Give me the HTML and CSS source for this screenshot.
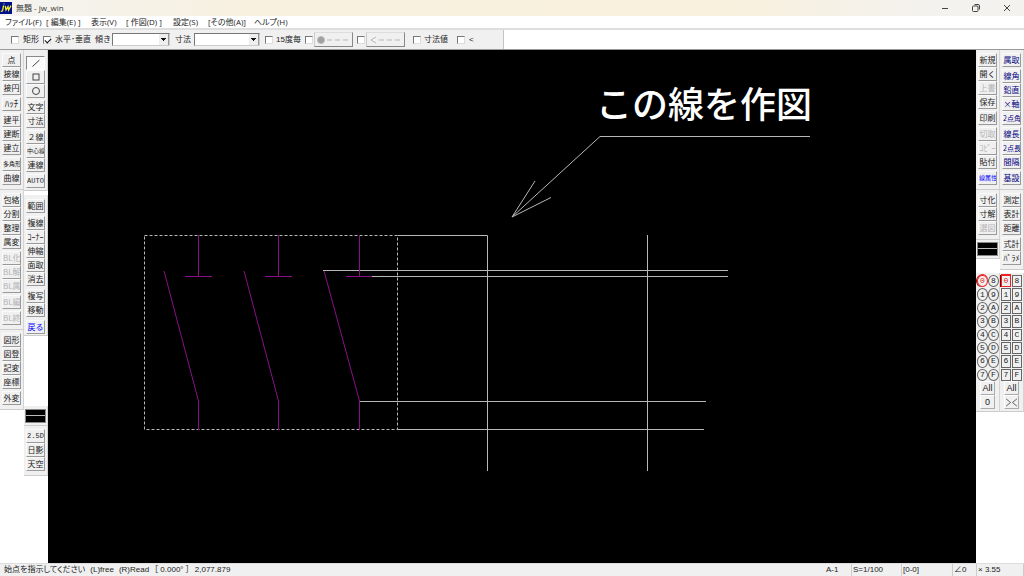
FILE: index.html
```html
<!DOCTYPE html>
<html lang="ja">
<head>
<meta charset="utf-8">
<title>無題 - jw_win</title>
<link rel="stylesheet" href="styles.css">
</head>
<body>
<div class="app">
<header class="titlebar">
  <svg class="logo" viewBox="0 0 12 12" aria-hidden="true"><rect width="12" height="12" fill="#00108a"/><path d="M3.6 3.5L2.6 8.4Q2.3 9.6 .8 9.2M4 1.6v.6M5.3 3.8L6 8L8 4.6L8.6 8L11 3.6" fill="none" stroke="#f4ee20" stroke-width="1.3"/></svg>
  <h1 class="title">無題 - jw_win</h1>
  <button class="win" aria-label="最小化"><svg viewBox="0 0 10 10"><path d="M2 5.5h6"/></svg></button>
  <button class="win" aria-label="元に戻す"><svg viewBox="0 0 10 10"><rect x="1.5" y="3" width="5.500" height="5.500" rx="1"/><path d="M3.500 1.500H7a1.500 1.500 0 0 1 1.500 1.500V6.500"/></svg></button>
  <button class="win" aria-label="閉じる"><svg viewBox="0 0 10 10"><path d="M2 2l6 6M8 2l-6 6"/></svg></button>
</header>
<nav class="menu">
  <a href="#">ファイル(F)</a><a href="#">[ 編集(E) ]</a><a href="#">表示(V)</a><a href="#">[ 作図(D) ]</a><a href="#">設定(S)</a><a href="#">[その他(A)]</a><a href="#">ヘルプ(H)</a>
</nav>
<div class="toolrow">
<form class="options">
  <input type="checkbox" id="rect"><label for="rect">矩形</label>
  <input type="checkbox" id="hv" checked><label for="hv">水平･垂直</label>
  <label for="slope">傾き</label><select id="slope"><option></option></select>
  <label for="size">寸法</label><select id="size"><option></option></select>
  <input type="checkbox" id="deg"><label for="deg">15度毎</label>
  <input type="checkbox" id="dot" aria-label="端点"><button type="button" class="endbtn" disabled aria-label="端点設定"><svg viewBox="0 0 34 10"><circle cx="4" cy="5" r="3.500" fill="#a0a0a0"/><path d="M10 5h5M18 5h5M26 5h5"/></svg></button>
  <input type="checkbox" id="arr" aria-label="矢印"><button type="button" class="endbtn" disabled aria-label="矢印設定"><svg viewBox="0 0 34 10"><path d="M7 2L2 5l5 3M10 5h5M18 5h5M26 5h5"/></svg></button>
  <input type="checkbox" id="val"><label for="val">寸法値</label>
  <input type="checkbox" id="lt"><label for="lt">&lt;</label>
</form>
</div>
<main class="work">
<aside class="side">
  <div class="col">
    <div class="panel">
      <div class="group"><button>点</button><button>接線</button><button>接円</button></div>
      <div class="group"><button class="kana">ﾊｯﾁ</button></div>
      <div class="group"><button>建平</button><button>建断</button><button>建立</button></div>
      <div class="group"><button class="tight">多角形</button><button>曲線</button></div>
    </div>
    <div class="panel">
      <div class="group"><button>包絡</button><button>分割</button><button>整理</button><button>属変</button></div>
      <div class="group"><button disabled>BL化</button><button disabled>BL解</button><button disabled>BL属</button></div>
      <div class="group"><button disabled>BL編</button></div>
      <div class="group"><button disabled>BL終</button></div>
    </div>
    <div class="panel">
      <div class="group"><button>図形</button><button>図登</button><button>記変</button><button>座標</button></div>
      <div class="group"><button>外変</button></div>
    </div>
  </div>
  <div class="col">
    <div class="panel first">
      <div class="group">
        <button class="on" aria-label="線"><svg viewBox="0 0 10 10"><path d="M1.500 8.500L8.500 2"/></svg></button>
        <button aria-label="矩形"><svg viewBox="0 0 10 10"><rect x="2" y="2" width="6" height="6"/></svg></button>
        <button aria-label="円"><svg viewBox="0 0 10 10"><circle cx="5" cy="5" r="3.500"/></svg></button>
      </div>
      <div class="group"><button>文字</button><button>寸法</button></div>
      <div class="group"><button>２線</button><button class="tight">中心線</button><button>連線</button></div>
      <div class="group"><button class="mono">AUTO</button></div>
    </div>
    <div class="panel edit">
      <div class="group"><button>範囲</button></div>
      <div class="group"><button>複線</button><button>ｺｰﾅｰ</button><button>伸縮</button><button>面取</button><button>消去</button></div>
      <div class="group"><button>複写</button><button>移動</button></div>
      <div class="group"><button class="blue">戻る</button></div>
    </div>
    <div class="panel attr low"><button class="swatch" aria-label="線属性"></button></div>
    <div class="panel">
      <div class="group"><button class="mono">2.5D</button><button>日影</button><button>天空</button></div>
    </div>
  </div>
</aside>
<section class="canvas">
  <svg viewBox="48 50 928 513" preserveAspectRatio="xMinYMin meet" role="img" aria-label="作図">
    <text x="596" y="118">この線を作図</text>
    <g class="white">
      <path d="M512 217L600 136.500H810M535 181L512 217L551 197.500"/>
      <path d="M397.500 235.500H487.500V471M647.500 235V471M323 270.500H728M372 276.500H728M359 401.500H706M397 429.500H704"/>
      <path class="dash" d="M144.500 235.500H397.500V429.500H144.500Z"/>
    </g>
    <g class="purple">
      <path d="M198.500 235V276M185 276.500H212M164 271L198.500 401V430"/>
      <path d="M278.500 235V276M265 276.500H292M244 271L278.500 401V430"/>
      <path d="M359.500 235V276M346 276.500H372M324 271L359.500 401V430"/>
    </g>
  </svg>
</section>
<aside class="side right">
  <div class="col">
    <div class="panel">
      <div class="group"><button>新規</button><button>開く</button><button disabled>上書</button><button>保存</button></div>
      <div class="group"><button>印刷</button></div>
      <div class="group"><button disabled>切取</button><button disabled>ｺﾋﾟｰ</button><button>貼付</button></div>
      <div class="group"><button class="tight blue">線属性</button></div>
    </div>
    <div class="panel"><div class="group"><button>寸化</button><button>寸解</button><button disabled>選図</button></div></div>
    <div class="panel attr"><button class="swatch" aria-label="線色"></button></div>
    <div class="panel layers round">
      <div class="grid"><button class="cur">0</button><button>8</button><button>1</button><button>9</button><button>2</button><button>A</button><button>3</button><button>B</button><button>4</button><button>C</button><button>5</button><button>D</button><button>6</button><button>E</button><button>7</button><button>F</button></div>
      <button class="all">All</button><button class="all">0</button>
    </div>
  </div>
  <div class="col">
    <div class="panel navy">
      <div class="group"><button>属取</button></div>
      <div class="group"><button>線角</button><button>鉛直</button><button>×軸</button><button class="digit">2点角</button></div>
      <div class="group"><button>線長</button><button class="digit">2点長</button><button>間隔</button></div>
      <div class="group"><button>基設</button></div>
    </div>
    <div class="panel">
      <div class="group"><button>測定</button><button>表計</button><button>距離</button></div>
      <div class="group"><button>式計</button><button>ﾊﾟﾗﾒ</button></div>
    </div>
    <div class="panel layers">
      <div class="grid"><button class="cur">0</button><button>8</button><button>1</button><button>9</button><button>2</button><button>A</button><button>3</button><button>B</button><button>4</button><button>C</button><button>5</button><button>D</button><button>6</button><button>E</button><button>7</button><button>F</button></div>
      <button class="all">All</button><button class="all" aria-label="反転"><svg viewBox="0 0 14 10"><path d="M1 1l5 4l-5 4M13 1L8 5l5 4"/></svg></button>
    </div>
  </div>
</aside>
</main>
<footer class="status">
  <p class="message"><span>始点を指示してください</span><span>(L)free</span><span>(R)Read</span><span>［ 0.000° ］</span><span>2,077.879</span></p>
  <button>A-1</button><button>S=1/100</button><button>[0-0]</button><button>∠0</button><button>× 3.55</button>
</footer>
</div>
</body>
</html>
```

FILE: styles.css
```css
* { box-sizing: border-box; }
body { margin: 0; background: #fff; color: #222; font: 8px/12px "Liberation Sans", "Noto Sans CJK JP", sans-serif; }
button { margin: 0; padding: 0; border: 0; background: none; color: inherit; font: inherit; white-space: nowrap; }
svg { display: block; }
.app { display: flex; flex-direction: column; height: 100vh; overflow: hidden; }

.titlebar { display: flex; align-items: center; flex: none; height: 16px; background: linear-gradient(90deg, #f4f3f0, #f8f1df 26%, #f9f1dd 70%, #f3f2ef 92%); }
.logo { width: 12px; height: 12px; }
.title { flex: 1; margin: 0 0 0 4px; font: 8px/14px "Open Sans", "Noto Sans CJK JP", sans-serif; color: #333; }
.win { display: flex; justify-content: center; width: 31px; }
.win:last-child { margin-right: 2px; }
.win svg { width: 10px; height: 10px; fill: none; stroke: #444; stroke-width: 1; }

.menu { display: grid; grid-template-columns: 41px 45px 35px 47px 35px 46px 40px; flex: none; height: 14px; padding-left: 5px; border-bottom: 2px solid #dedede; font-family: "Open Sans", "Noto Sans CJK JP", sans-serif; font-feature-settings: "palt"; }
.menu a { color: #222; text-decoration: none; white-space: nowrap; }

.toolrow { flex: none; height: 20px; border-bottom: 1px solid #999; }
.options { display: grid; grid-template-columns: 12px 20px 12px 40px 17px 63px 19px 71px 11px 29px 9px 43px 9px 47px 11px 33px 12px 34px; align-items: center; width: max-content; height: 19px; padding-left: 11px; border-right: 1px solid #c4c4c4; background: #f0f0f0; white-space: nowrap; }
.options input { appearance: none; width: 8px; height: 8px; margin: 0; border: 1px solid #ddd; border-top-color: #777; border-left-color: #777; background: #fff; }
.options input:checked::after { content: ""; display: block; width: 5px; height: 3px; margin: 1px 0 0 1px; border: solid #111; border-width: 0 0 1px 1px; transform: rotate(-45deg); }
.options select { appearance: none; justify-self: start; width: 58px; height: 13px; padding: 0; border: 1px solid #ccc; border-top-color: #777; border-left-color: #777; border-radius: 0; background: linear-gradient(#999, #999) no-repeat right / 1px 100%, conic-gradient(from -45deg at 50% 100%, #111 90deg, transparent 0) no-repeat right 3px top 4px / 5px 3px, linear-gradient(#eee, #eee) no-repeat right / 10px 100%, #fff; }
.options #size { width: 66px; }
.endbtn { width: 39px; height: 15px; border: 1px solid #888; border-top-color: #ddd; border-left-color: #ccc; }
.endbtn svg { width: 34px; height: 10px; margin: 0 auto; fill: none; stroke: #b8b8b8; }

.work { display: flex; flex: 1; min-height: 0; }
.side { display: grid; grid-template-columns: 24px 24px; flex: none; background: #fff; }
.col { display: flex; flex-direction: column; }
.panel { display: flex; flex-direction: column; gap: 2px; flex: none; padding: 3px 2px 4px; border-right: 1px solid #d4d4d4; border-bottom: 1px solid #ccc; background: #f0f0f0; }
.group { display: flex; flex-direction: column; }
.group button { height: 14px; border: 1px solid #999; border-top-color: #fafafa; border-left-color: #fafafa; overflow: hidden; font: 8px/12px "Noto Sans CJK JP", sans-serif; }
.group svg { width: 10px; height: 10px; margin: 0 auto; fill: none; stroke: #444; stroke-width: 1; }
.group button:disabled { color: #b4b4b4; }
.group .on { border-color: #888 #fff #fff #888; background: #fafafa; }
.group .tight { font-size: 6px; }
.group .kana { font-size: 9px; }
.group .digit { font-size: 7px; }
.group .mono { font: 7px/12px "Liberation Mono", monospace; }
.group .blue { color: #00f; }
.navy { color: #000080; }
.first { padding-top: 6px; padding-bottom: 2px; }
.edit { gap: 3px; margin-top: 4px; padding: 4px 2px 1px; }
.attr { padding: 2px 1px 2px; }
.low { margin-top: 70px; padding-top: 3px; }
.swatch { height: 14px; border: 1px solid #888; background: linear-gradient(#000 5px, #bbb 5px 6px, #000 6px); }

.canvas { flex: 1; min-width: 0; overflow: hidden; background: #000; }
.canvas svg { width: 100%; fill: none; }
.canvas text { fill: #fff; font: 500 36px "Noto Sans CJK JP", sans-serif; }
.white { stroke: #b8b8b8; }
.purple { stroke: #8a108a; }
.dash { stroke-dasharray: 3 2; }

.right .layers { gap: 0; padding: 1px 0 2px; margin-top: 14px; }
.right .col:last-child .layers { margin-top: 3px; }
.grid { display: grid; grid-template-columns: 1fr 1fr; grid-template-rows: repeat(8, 1fr); height: 107px; margin-left: 1px; }
.grid button { margin: 1px 1px 0 0; border: 1px solid #666; font: 8px/10px "Liberation Mono", monospace; }
.round .grid button { margin-right: 0; border-radius: 50%; }
.grid .cur, .round .grid .cur { border-color: #e22; color: #d22; box-shadow: 0 -1px #e22, -1px 0 #700; }
.all { align-self: center; width: 15px; height: 14px; border: 1px solid #aaa; border-top-color: #fff; border-left-color: #fff; font-size: 9px; line-height: 12px; }
.all svg { width: 13px; height: 9px; fill: none; stroke: #555; }

.status { display: grid; grid-template-columns: 1fr 27px 50px 51px 24px 47px; align-items: center; flex: none; height: 13px; border-top: 1px solid #ddd; background: #f0f0f0; font-feature-settings: "palt"; }
.status p { display: flex; gap: 5px; margin: 0; padding-left: 4px; }
.status button { padding-left: 1px; border-right: 1px solid #ccc; text-align: left; }
```
